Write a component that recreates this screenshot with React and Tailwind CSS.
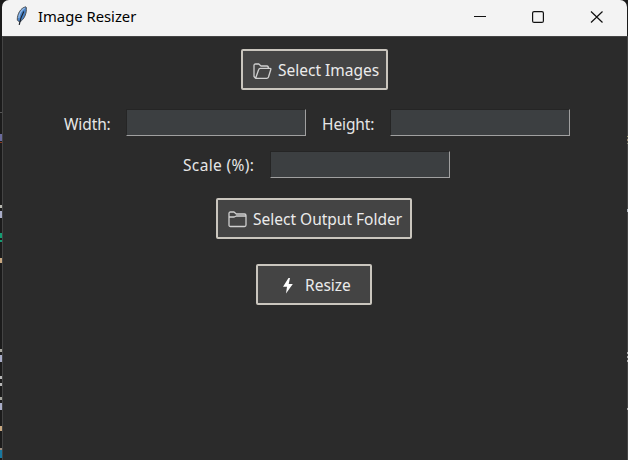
const leftFragments = [
  { y: 112, h: 1, c: '#555555' }, { y: 134, h: 7, c: '#6a6a9c' }, { y: 142, h: 1, c: '#8a3a20' },
  { y: 205, h: 3, c: '#b8b8b0' }, { y: 211, h: 7, c: '#a9adc8' }, { y: 233, h: 5, c: '#149c72' },
  { y: 240, h: 2, c: '#149c72' }, { y: 258, h: 5, c: '#c9a880' }, { y: 349, h: 3, c: '#a8a8a0' },
  { y: 355, h: 7, c: '#a9adc8' }, { y: 376, h: 3, c: '#b8b8b8' }, { y: 383, h: 3, c: '#b8b8b8' },
  { y: 397, h: 3, c: '#a8a8a0' }, { y: 403, h: 7, c: '#a9adc8' }, { y: 426, h: 5, c: '#c9a880' },
  { y: 448, h: 2, c: '#a09080' }, { y: 450, h: 8, c: '#1878a0' },
];
const rightFragments = [
  { y: 136, h: 1, c: '#a09a70' }, { y: 139, h: 2, c: '#9a8a70' }, { y: 143, h: 1, c: '#8a8a70' },
  { y: 209, h: 3, c: '#b0b8c0' }, { y: 352, h: 2, c: '#b0b0b0' }, { y: 356, h: 2, c: '#b0b0b0' },
  { y: 360, h: 2, c: '#b0b0b0' }, { y: 408, h: 2, c: '#b0b0b0' },
];

function Fragments({ items, className }) {
  return (
    <div className={`absolute top-0 ${className}`}>
      {items.map((f) => (
        <i key={f.y} className="absolute inset-x-0" style={{ top: f.y, height: f.h, background: f.c }} />
      ))}
    </div>
  );
}

function Feather() {
  return (
    <svg className="ml-[14px] h-5 w-3 shrink-0" viewBox="0 0 12 20" fill="none">
      <path d="M9.8 .8C5 1.8 1 7.6 1.3 14.2L3.6 16C8.2 13.6 11 7.2 10.3 1.4Z" fill="#4a84c8" stroke="#555" strokeWidth="1" />
      <path d="M8.7 2C5 4.5 3.2 8 2.8 12" stroke="#94b9e4" strokeWidth="1.3" />
      <path d="M7.8 5.5C5.6 9.5 4.5 12 3.2 18.8" stroke="#1b222c" strokeWidth="1.2" />
    </svg>
  );
}

function Button({ className, children }) {
  return (
    <button className={`flex h-[41px] items-center rounded-[2px] border-2 border-[#cac6be] bg-[#444444] whitespace-nowrap text-[#ebebeb] ${className}`}>
      {children}
    </button>
  );
}

function Entry() {
  return <input className="h-[27px] w-[180px] border border-t-[#252525] border-r-[#a0a0a0] border-b-[#a0a0a0] border-l-[#252525] bg-[#3c3f41] px-1 text-white outline-none" />;
}

export default function App() {
  return (
    <div className="relative h-[460px] w-[628px] overflow-hidden bg-[#1b1b1b] font-['Noto_Sans','Open_Sans',sans-serif] text-[15.5px] leading-5 text-[#e6e6e6]">
      <div className="ml-[2px] flex h-[460px] w-[625px] flex-col overflow-hidden rounded-t-[7px] bg-[#2b2b2b]">
        <header className="flex h-9 shrink-0 items-center bg-[#f3f3f3] pb-1 text-black">
          <Feather />
          <h1 className="ml-[10px] w-[98px] pb-px text-[14.8px] whitespace-nowrap">Image Resizer</h1>
          <svg className="mt-px mr-[23px] ml-auto h-3 w-[130px]" viewBox="0 0 130 12" fill="none" stroke="#111" strokeWidth="1.2">
            <path d="M0 5.5H12" shapeRendering="crispEdges" />
            <rect x="58.6" y=".6" width="10.8" height="10.8" rx="1.5" />
            <path d="M117 .5l11.5 11M128.5 .5l-11.5 11" />
          </svg>
        </header>
        <main className="flex flex-1 flex-col border-t border-l border-[#444444]">
          <Button className="mt-3 ml-[238px] w-[147px]">
            <svg className="mt-[3px] ml-[10px] h-[17px] w-[19px]" viewBox="0 0 19 17" fill="none" stroke="#d0d0d0" strokeWidth="1.3" strokeLinejoin="round">
              <path d="M2.6 15.3L1 13.5V2.5Q1 1 2.5 1H5.8L8 3H14Q15.4 3 15.4 5.2M2.6 15.3L5.6 6.7Q6 5.3 7.3 5.3H17Q18.2 5.3 17.8 6.5L15.5 14Q15 15.3 13.7 15.3Z" />
            </svg>
            <span className="ml-[6px]">Select Images</span>
          </Button>
          <div className="mt-[19px] flex items-center">
            <label className="ml-[61px] w-[62px] pt-[3px] tracking-[-0.1px]">Width:</label>
            <Entry />
            <label className="ml-[16px] w-[68px] pt-[3px] tracking-[-0.1px]">Height:</label>
            <Entry />
          </div>
          <div className="mt-[15px] flex items-center">
            <label className="ml-[180px] w-[87px] tracking-[0.35px]">Scale (%):</label>
            <Entry />
          </div>
          <Button className="mt-5 ml-[213px] w-[196px]">
            <svg className="mt-[2px] ml-[10px] h-[17px] w-[19px]" viewBox="0 0 19 17" fill="none" stroke="#d0d0d0" strokeWidth="1.3" strokeLinejoin="round">
              <path d="M1 2.5Q1 1 2.5 1H6L8.3 3H16.5Q18 3 18 4.5V14Q18 15.5 16.5 15.5H2.5Q1 15.5 1 14ZM1 6H6.2L8.3 5H18" />
            </svg>
            <span className="ml-[6px]">Select Output Folder</span>
          </Button>
          <Button className="mt-[25px] ml-[253px] w-[116px]">
            <svg className="mt-[3px] ml-[24px] h-4 w-[12px]" viewBox="0 0 12 16">
              <path d="M6.5 0L1 8.8H5L4 15.5L10.8 6H6.7L8 0Z" fill="white" />
            </svg>
            <span className="ml-[11px]">Resize</span>
          </Button>
        </main>
      </div>
      <Fragments items={leftFragments} className="left-0 w-[2px]" />
      <div className="absolute top-9 right-0 h-[424px] w-px bg-[#444444]" />
      <Fragments items={rightFragments} className="right-0 w-px" />
    </div>
  );
}
